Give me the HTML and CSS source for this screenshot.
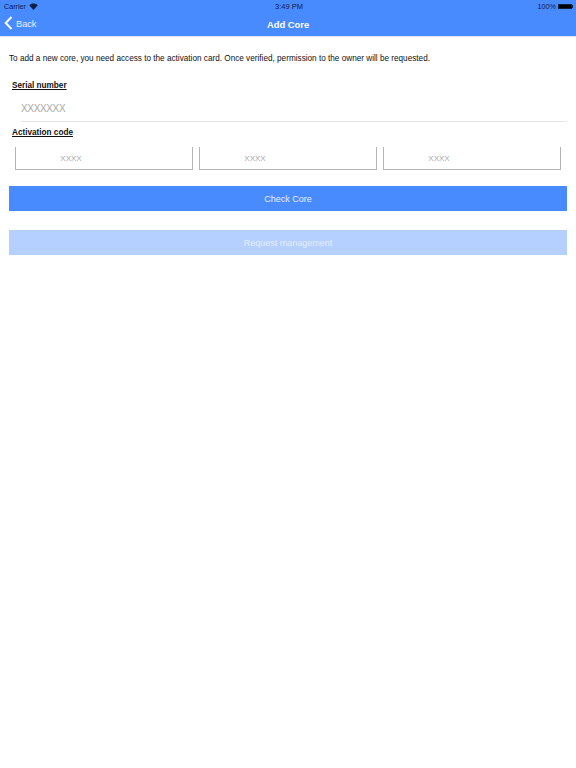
FILE: index.html
```html
<!DOCTYPE html>
<html lang="en">
<head>
    <meta charset="UTF-8">
    <meta name="viewport" content="width=device-width, initial-scale=1.0">
    <title>Add Core</title>
    <link rel="stylesheet" href="styles.css">
</head>
<body>
    <div class="top-bar">
        <div class="status-bar">
            <div class="status-left">
                <span>Carrier</span>
                <svg class="wifi" width="9" height="7" viewBox="0 0 20 15">
                    <path d="M10 15 L0.5 4.8 C6 -0.8 14 -0.8 19.5 4.8 Z" fill="#10203f"/>
                </svg>
            </div>
            <span class="status-time">3:49 PM</span>
            <div class="status-right">
                <span>100%</span>
                <div class="battery"></div>
                <div class="battery-tip"></div>
            </div>
        </div>
        <div class="nav-bar">
            <a href="#" class="back-link">
                <svg width="9" height="14" viewBox="0 0 9 14">
                    <path d="M7.5 1 L1.7 7 L7.5 13" fill="none" stroke="#fff" stroke-width="2"/>
                </svg>
                <span class="back-text">Back</span>
            </a>
            <h1>Add Core</h1>
        </div>
    </div>
    <div class="content">
        <p class="intro">To add a new core, you need access to the activation card. Once verified, permission to the owner will be requested.</p>
        <h2 class="field-label">Serial number</h2>
        <div class="serial-field">XXXXXXX</div>
        <h2 class="field-label">Activation code</h2>
        <div class="code-row">
            <div class="code-field">XXXX</div>
            <div class="code-field">XXXX</div>
            <div class="code-field">XXXX</div>
        </div>
        <button class="action-button">Check Core</button>
        <button class="action-button disabled">Request management</button>
    </div>
</body>
</html>
```

FILE: styles.css
```css
body {
    margin: 0;
    font-family: "Liberation Sans", Arial, sans-serif;
    background-color: #fff;
    color: #111;
}
.top-bar {
    height: 36px;
    background-color: #488aff;
    border-bottom: 1px solid #dfe6f2;
}
.status-bar {
    height: 12px;
    display: flex;
    justify-content: space-between;
    align-items: center;
    padding: 0 3px 0 4px;
    font-size: 7.2px;
    color: #10203f;
    position: relative;
}
.status-left, .status-right {
    display: flex;
    align-items: center;
}
.wifi {
    margin-left: 3px;
}
.status-time {
    position: absolute;
    left: 275px;
    top: 2px;
    font-size: 7.5px;
}
.battery {
    width: 12px;
    height: 3px;
    margin-left: 2px;
    background-color: #000;
    border: 1px solid #10203f;
}
.battery-tip {
    width: 1px;
    height: 3px;
    background-color: #10203f;
}
.nav-bar {
    height: 24px;
    display: flex;
    align-items: center;
    justify-content: center;
    position: relative;
}
.nav-bar h1 {
    margin: 0;
    font-size: 9.4px;
    font-weight: bold;
    color: #fff;
}
.back-link {
    position: absolute;
    left: 4px;
    top: 4px;
    display: flex;
    align-items: center;
    gap: 3px;
    font-size: 9.4px;
    letter-spacing: -0.1px;
    color: #e6efff;
    text-decoration: none;
}
.back-text {
    padding-top: 1px;
}
.content {
    padding: 16px 9px;
}
.intro {
    margin: 0 0 15px;
    font-size: 8.2px;
    line-height: 12px;
}
.field-label {
    margin: 0 0 0 3px;
    font-size: 8.2px;
    line-height: 12px;
    font-weight: bold;
    text-decoration: underline;
}
.serial-field {
    margin: 5px 0 5px 12px;
    height: 25px;
    line-height: 24px;
    font-size: 10px;
    letter-spacing: -0.35px;
    color: #a8a8a8;
    border-bottom: 1px solid #e6e6e6;
    box-sizing: border-box;
}
.code-row {
    display: flex;
    gap: 6px;
    margin: 8px 6px 16px;
}
.code-field {
    flex: 1;
    height: 23px;
    line-height: 23px;
    padding-right: 66px;
    box-sizing: border-box;
    text-align: center;
    font-size: 8px;
    color: #a8a8a8;
    border: 1px solid #b4b4b4;
    border-top: none;
}
.action-button {
    display: block;
    width: 100%;
    height: 25px;
    margin-bottom: 19px;
    border: none;
    background-color: #488aff;
    color: #e6efff;
    font-family: inherit;
    font-size: 9px;
}
.action-button.disabled {
    background-color: #b5d0ff;
    color: #e3edff;
}
```
